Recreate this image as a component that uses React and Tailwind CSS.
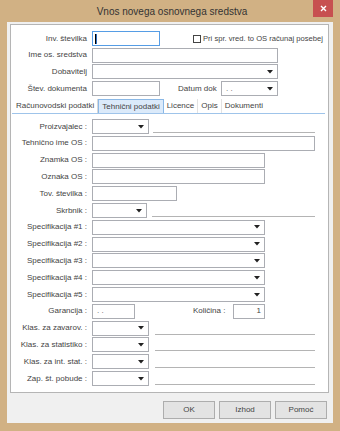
import React from "react";

const box = "h-[15px] border border-[#abadb3] bg-white";

function Arrow() {
  return (
    <svg width="6" height="4" viewBox="0 0 6 4" className="ml-auto mr-[4px]">
      <path d="M0 0 L6 0 L3 3.5 Z" fill="#222" />
    </svg>
  );
}

function Select({ w, text }) {
  return (
    <div className={`${w} ${box} flex items-center`}>
      {text && <span className="pl-[4px] text-[#666] leading-none">{text}</span>}
      <Arrow />
    </div>
  );
}

function Row({ label, children }) {
  return (
    <div className="flex items-center h-[15px]">
      <div className="w-[76px] text-right whitespace-nowrap">{label}</div>
      <div className="ml-[5px] flex items-center h-full">{children}</div>
    </div>
  );
}

function Line({ w }) {
  return <div className={`self-end mb-[1px] h-px bg-[#b4b4b4] ${w}`} />;
}

function App() {
  const tabs = ["Računovodski podatki", "Tehnični podatki", "Licence", "Opis", "Dokumenti"];

  return (
    <div className="w-[340px] h-[431px] bg-[#d1b184] flex flex-col font-['Liberation_Sans',Arial,sans-serif] text-[8px] text-[#444]">
      {/* title bar */}
      <div className="relative h-[22px] flex items-center justify-center">
        <span className="text-[10px] text-[#333] ml-[4px]">Vnos novega osnovnega sredstva</span>
        <div className="absolute right-[7px] top-0 w-[20px] h-[17px] bg-[#c75050] flex items-center justify-center">
          <svg width="7" height="7" viewBox="0 0 7 7">
            <path d="M1 1 L6 6 M6 1 L1 6" stroke="#fff" strokeWidth="1.4" />
          </svg>
        </div>
      </div>

      {/* client area */}
      <div className="mx-[7px] flex-1 bg-[#f0f0f0] flex flex-col">
        <div className="mt-[2px] ml-[3px] mr-[4px] h-[369px] bg-white border border-[#b5b5b5] pt-[6px]">
          {/* header fields */}
          <div className="flex flex-col gap-[1.7px]">
            <Row label="Inv. številka">
              <div className="w-[68px] h-[15px] border border-[#569de5] bg-white flex items-center pl-[2px]">
                <div className="w-[2px] h-[10px] bg-[#2f6fc0] border-l border-black" />
              </div>
              <div className="ml-[33px] w-[8px] h-[8px] border border-[#444] bg-white" />
              <span className="ml-[2px] whitespace-nowrap text-[7.6px]">Pri spr. vred. to OS računaj posebej</span>
            </Row>
            <Row label="Ime os. sredstva">
              <div className={`w-[186px] ${box}`} />
            </Row>
            <Row label="Dobavitelj">
              <Select w="w-[186px]" />
            </Row>
            <Row label="Štev. dokumenta">
              <div className={`w-[68px] ${box}`} />
              <span className="ml-[18px] w-[37px] whitespace-nowrap">Datum dok</span>
              <div className="ml-[6px]">
                <Select w="w-[57px]" text=". ." />
              </div>
            </Row>
          </div>

          {/* tabs */}
          <div className="mt-[3px] ml-[1px] w-[313px] border-b border-[#9fc4ea] flex h-[15px] pl-[1px]">
            {tabs.map((t, i) =>
              i === 1 ? (
                <div
                  key={t}
                  className="h-[14px] px-[3px] flex items-center bg-[#dbeafa] border border-b-0 border-[#8ab8e6] whitespace-nowrap"
                >
                  {t}
                </div>
              ) : (
                <div
                  key={t}
                  className={`h-[14px] px-[3px] flex items-center whitespace-nowrap ${
                    i === 0 ? "border-r border-[#d8d8d8]" : i === 4 ? "" : "border-r border-[#e2e2e2]"
                  }`}
                >
                  {t}
                </div>
              )
            )}
          </div>

          {/* tab content */}
          <div className="mt-[5px] flex flex-col gap-[1.8px]">
            <Row label="Proizvajalec :">
              <Select w="w-[57px]" />
              <div className="ml-[4px] h-full flex">
                <Line w="w-[162px]" />
              </div>
            </Row>
            <Row label="Tehnično ime OS :">
              <div className={`w-[223px] ${box}`} />
            </Row>
            <Row label="Znamka OS :">
              <div className={`w-[173px] ${box}`} />
            </Row>
            <Row label="Oznaka OS :">
              <div className={`w-[173px] ${box}`} />
            </Row>
            <Row label="Tov. številka :">
              <div className={`w-[85px] ${box}`} />
            </Row>
            <Row label="Skrbnik :">
              <Select w="w-[55px]" />
              <div className="ml-[5px] h-full flex">
                <Line w="w-[163px]" />
              </div>
            </Row>
            {["#1", "#2", "#3", "#4", "#5"].map((n) => (
              <Row key={n} label={`Specifikacija ${n} :`}>
                <Select w="w-[173px]" />
              </Row>
            ))}
            <Row label="Garancija :">
              <div className={`w-[43px] ${box} flex items-center pl-[4px] text-[#666]`}>. .</div>
              <span className="ml-[58px] w-[34px] whitespace-nowrap">Količina :</span>
              <div className={`ml-[6px] w-[32px] ${box} flex items-center justify-end pr-[3px]`}>1</div>
            </Row>
            {["Klas. za zavarov. :", "Klas. za statistiko :", "Klas. za int. stat. :", "Zap. št. pobude :"].map((l) => (
              <Row key={l} label={l}>
                <Select w="w-[57px]" />
                <div className="ml-[6px] h-full flex">
                  <Line w="w-[160px]" />
                </div>
              </Row>
            ))}
          </div>
        </div>

        {/* buttons */}
        <div className="mt-[8px] pr-[6px] flex justify-end gap-[4px]">
          {["OK", "Izhod", "Pomoć"].map((b) => (
            <button
              key={b}
              className="w-[52px] h-[18px] bg-[#e3e3e3] border border-[#adadad] flex items-center justify-center text-[8px] text-[#444]"
            >
              {b}
            </button>
          ))}
        </div>
      </div>
      <div className="h-[8px]" />
    </div>
  );
}

export default App;
